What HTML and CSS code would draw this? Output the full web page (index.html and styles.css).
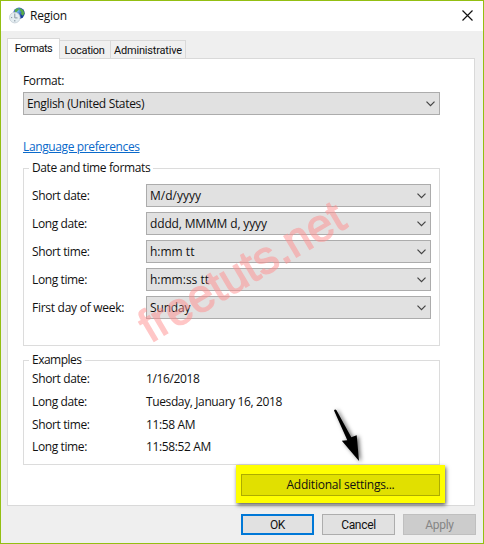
FILE: index.html
```html
<!DOCTYPE html>
<html lang="en">
<head>
<meta charset="utf-8">
<title>Region</title>
<link rel="stylesheet" href="styles.css">
</head>
<body>
<main class="window">
  <header class="titlebar">
    <svg class="globe" width="17" height="17" viewBox="0 0 17 17">
      <defs><radialGradient id="sea" cx=".4" cy=".3"><stop offset="0" stop-color="#76bdf4"/><stop offset="1" stop-color="#173d9c"/></radialGradient></defs>
      <circle cx="10" cy="6.2" r="5.7" fill="url(#sea)"/>
      <path d="M6 2.5 9 1l1 1.5-2 2L6 6zM11 1l3 2 1.5 3-1.5 3-2-2 .5-2-2-2z" fill="#58ac48"/>
      <circle cx="5.8" cy="10.6" r="5.3" fill="#e4edf1" stroke="#c4ced5" stroke-width=".8"/>
      <path d="M5.8 6.5v4.4H8.5M5.8 13v1.5M2 10.6h1.2" fill="none" stroke="#8795a0" stroke-width="1"/>
    </svg>
    <h1>Region</h1>
    <svg class="close" width="11" height="11" viewBox="0 0 11 11"><path d="M.5.5l10 10M10.5.5l-10 10" stroke="#111" stroke-width="1.2"/></svg>
  </header>
  <nav class="tabs">
    <span class="tab active">Formats</span><span class="tab location">Location</span><span class="tab admin">Administrative</span>
  </nav>
  <section class="panel">
    <div class="label">Format:</div>
    <div class="select"><span class="mid">English (United States)</span><svg class="chev" viewBox="0 0 9 6"><path d="M.5.7l4 4 4-4"/></svg></div>
    <a class="link">Language preferences</a>
    <fieldset class="group formats">
      <legend>Date and time formats</legend>
      <div class="row"><span>Short date:</span><div class="select"><span class="wide">M/d/yyyy</span><svg class="chev" viewBox="0 0 9 6"><path d="M.5.7l4 4 4-4"/></svg></div></div>
      <div class="row"><span>Long date:</span><div class="select"><span>dddd, MMMM d, yyyy</span><svg class="chev" viewBox="0 0 9 6"><path d="M.5.7l4 4 4-4"/></svg></div></div>
      <div class="row"><span>Short time:</span><div class="select"><span class="wide">h:mm tt</span><svg class="chev" viewBox="0 0 9 6"><path d="M.5.7l4 4 4-4"/></svg></div></div>
      <div class="row"><span>Long time:</span><div class="select"><span class="wide">h:mm:ss tt</span><svg class="chev" viewBox="0 0 9 6"><path d="M.5.7l4 4 4-4"/></svg></div></div>
      <div class="row"><span class="week">First day of week:</span><div class="select"><span>Sunday</span><svg class="chev" viewBox="0 0 9 6"><path d="M.5.7l4 4 4-4"/></svg></div></div>
    </fieldset>
    <fieldset class="group examples">
      <legend class="tight">Examples</legend>
      <div class="row"><span>Short date:</span><span>1/16/2018</span></div>
      <div class="row"><span>Long date:</span><span>Tuesday, January 16, 2018</span></div>
      <div class="row"><span>Short time:</span><span>11:58 AM</span></div>
      <div class="row"><span>Long time:</span><span>11:58:52 AM</span></div>
    </fieldset>
    <div class="highlight"><div class="additional">Additional settings...</div></div>
  </section>
  <footer class="actions">
    <div class="button ok">OK</div><div class="button">Cancel</div><div class="button disabled">Apply</div>
  </footer>
  <div class="watermark">freetuts.net</div>
  <svg class="arrow" width="44" height="66" viewBox="0 0 44 66">
    <path d="M7 6.500Q8 4.800 9.500 6.200L24.300 33.200 29.700 31.300 32 57 14.800 36.800 20.300 36.300Z" fill="#000"/>
  </svg>
</main>
</body>
</html>
```
FILE: styles.css
```css
* { box-sizing: border-box; }
body { margin: 0; background: #fff; }
.window {
  position: relative;
  width: 484px;
  height: 544px;
  border: 1px solid #93bf12;
  background: #efefef;
  color: #111;
  font: 12px/16px "Open Sans", sans-serif;
  letter-spacing: -0.38px;
  overflow: hidden;
}
.titlebar {
  display: flex;
  align-items: center;
  height: 30px;
  padding: 0 9px 0 8px;
  background: #fff;
}
.globe { margin-top: -2px; }
h1 { margin: 0 auto 0 4px; font-size: 12px; font-weight: 400; letter-spacing: -0.25px; }
.close { margin: -2px 1px 0 0; }
.tabs { display: flex; align-items: flex-end; height: 27px; padding-left: 6px; font: 11px/16px Roboto, sans-serif; letter-spacing: -0.3px; }
.tab { height: 18px; padding-top: 2px; border: 1px solid #d9d9d9; border-width: 1px 1px 0 0; text-align: center; background: #f0f0f0; white-space: nowrap; }
.tab.active { position: relative; width: 53px; height: 21px; margin-bottom: -1px; border-left-width: 1px; background: #fff; letter-spacing: -0.5px; }
.location { width: 51px; }
.admin { width: 75px; letter-spacing: -0.2px; }
.tab.location { letter-spacing: -0.35px; padding-right: 1px; }
.panel { width: 468px; height: 448px; margin-left: 6px; padding: 14px 0 0 15px; border: 1px solid #d9d9d9; background: #fff; }
.label { height: 19px; letter-spacing: -0.35px; }
.select {
  display: flex;
  align-items: center;
  justify-content: space-between;
  width: 417px;
  height: 23px;
  padding: 0 4px 0 3px;
  border: 1px solid #acacac;
  background: #e1e1e1;
}
.chev { width: 9px; height: 6px; fill: none; stroke: #444; stroke-width: 1.2; }
.mid { letter-spacing: -0.33px; }
.link { display: block; width: max-content; height: 16px; margin-top: 24px; color: #0a6acb; text-decoration: underline; }
.group { position: relative; width: 417px; margin: 0; padding: 0 8px; border: 1px solid #dcdcdc; }
.group legend { position: absolute; top: -9px; left: 5px; padding: 0 3px; background: #fff; }
.group .tight { letter-spacing: -0.5px; }
.formats { height: 178px; margin-top: 13px; padding-top: 15px; }
.row { display: grid; grid-template-columns: 114px 285px; align-items: center; height: 23px; margin-bottom: 5px; }
.row .select { width: 285px; letter-spacing: -0.15px; }
.row .wide { letter-spacing: 0; }
.week { letter-spacing: -0.27px; }
.examples { height: 105px; margin-top: 14px; padding-top: 7px; }
.examples .row { height: 22.7px; margin: 0; }
.highlight { position: relative; width: 209px; height: 38px; margin-left: 213px; padding: 9px 5px 0; background: #ff0; box-shadow: 1px 2px 4px rgba(0,0,0,.65); }
.additional { height: 22px; border: 1px solid #adac00; background: #e1e000; line-height: 20px; text-align: center; letter-spacing: -0.23px; }
.actions { display: flex; justify-content: flex-end; gap: 8px; padding: 8px 7px 0 0; font: 12px/20px Roboto, sans-serif; letter-spacing: -0.3px; }
.button { width: 73px; height: 21px; border: 1px solid #adadad; background: #e1e1e1; text-align: center; }
.ok { border: 2px solid #0078d7; line-height: 18px; }
.disabled { color: #858585; background: #ccc; border-color: #bfbfbf; }
.watermark {
  position: absolute;
  left: 150px;
  top: 301px;
  font: 46px/50px "Liberation Sans", sans-serif;
  letter-spacing: 0;
  color: #ff8f8f;
  -webkit-text-stroke: 1.4px #ff8f8f;
  opacity: .5;
  transform-origin: 0 42px;
  transform: rotate(-30.5deg);
}
.arrow { position: absolute; left: 326px; top: 403px; filter: drop-shadow(2px 1px 2px rgba(0,0,0,.6)); }
```
